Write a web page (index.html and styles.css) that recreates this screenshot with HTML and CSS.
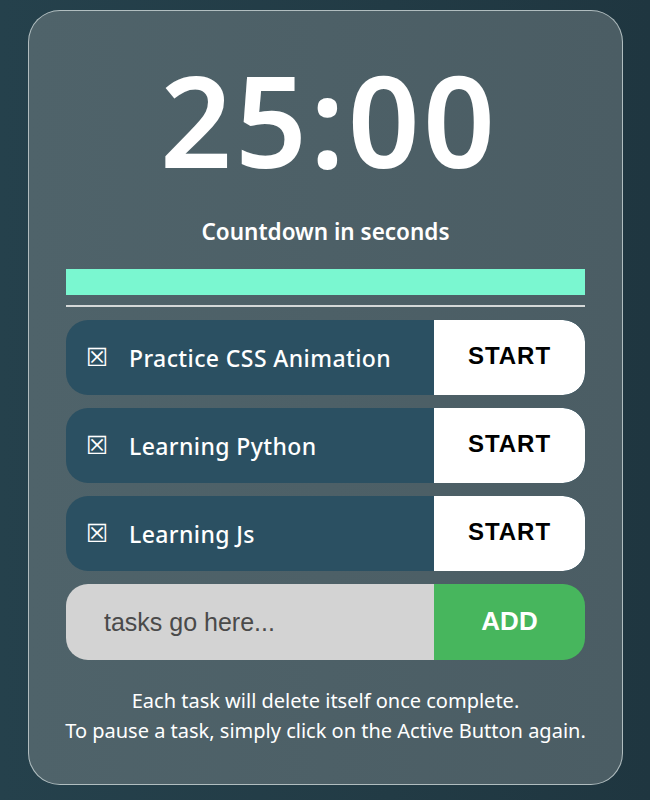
FILE: index.html
```html
<!DOCTYPE html>
<html>
<head>
<meta charset="utf-8">
<link rel="stylesheet" href="styles.css">
</head>
<body>
<main class="card">
  <div class="timer">25:00</div>
  <div class="caption">Countdown in seconds</div>
  <div class="progress"></div>
  <hr class="divider">
  <ul class="tasks">
    <li class="task"><span class="task-label"><span class="box">☒</span>Practice CSS Animation</span><button class="start">START</button></li>
    <li class="task"><span class="task-label"><span class="box">☒</span>Learning Python</span><button class="start">START</button></li>
    <li class="task"><span class="task-label"><span class="box">☒</span>Learning Js</span><button class="start">START</button></li>
  </ul>
  <form class="add-form">
    <input class="task-input" type="text" placeholder="tasks go here...">
    <button class="add" type="button">ADD</button>
  </form>
  <p class="note">Each task will delete itself once complete.<br>To pause a task, simply click on the Active Button again.</p>
</main>
</body>
</html>
```
FILE: styles.css
```css
* { box-sizing: border-box; }
html, body { margin: 0; height: 100%; }
body {
  background: linear-gradient(90deg, #25414c 0%, #223b45 60%, #1f3640 100%);
  font-family: "Noto Sans", "DejaVu Sans", sans-serif;
  color: #fff;
  padding: 10px 27px 15px 28px;
}
.card {
  width: 595px;
  height: 775px;
  border: 1px solid rgba(220, 230, 230, 0.7);
  border-radius: 32px;
  background: linear-gradient(90deg, #4f636a 0%, #4b5d64 100%);
  padding: 46px 37px 0;
  display: flex;
  flex-direction: column;
}
.timer {
  text-align: center;
  font-size: 126px;
  font-weight: 600;
  line-height: 120px;
  letter-spacing: 3px;
  padding-left: 7px;
  margin-top: 2px;
}
.caption {
  text-align: center;
  font-size: 22.5px;
  font-weight: 600;
  margin-top: 38px;
  line-height: 30px;
}
.progress {
  height: 26px;
  background: #7af7d0;
  margin-top: 22px;
}
.divider {
  border: 0;
  height: 2px;
  background: #d4d8d8;
  margin: 10px 0 0;
}
.tasks {
  list-style: none;
  margin: 13px 0 0;
  padding: 0;
  display: flex;
  flex-direction: column;
  gap: 13px;
}
.task {
  display: flex;
  height: 75px;
  border-radius: 22px;
  background: #2b5062;
  overflow: hidden;
}
.task-label {
  flex: 1;
  display: flex;
  align-items: center;
  padding-left: 20px;
  font-size: 23px;
  font-weight: 500;
  letter-spacing: 0.4px;
}
.box {
  font-family: "DejaVu Sans", sans-serif;
  font-size: 25px;
  width: 43px;
  color: #fff;
  letter-spacing: 0;
}
.start {
  width: 151px;
  border: 0;
  background: #fff;
  border-radius: 0 22px 22px 0;
  font-family: "Liberation Sans", Arial, sans-serif;
  font-weight: 700;
  font-size: 24px;
  letter-spacing: 1px;
  color: #000;
  padding: 0 0 4px;
}
.add-form {
  display: flex;
  height: 76px;
  margin-top: 13px;
  border-radius: 22px;
  overflow: hidden;
}
.task-input {
  flex: 1;
  border: 0;
  background: #d3d3d3;
  padding-left: 38px;
  font-family: "Liberation Sans", Arial, sans-serif;
  font-size: 25px;
  color: #444;
  outline: none;
}
.task-input::placeholder { color: #4a4a4a; }
.add {
  width: 151px;
  border: 0;
  background: #47b65d;
  color: #fff;
  font-family: "Liberation Sans", Arial, sans-serif;
  font-weight: 700;
  font-size: 26px;
  padding: 0 0 2px;
}
.note {
  text-align: center;
  font-size: 20px;
  line-height: 30px;
  white-space: nowrap;
  margin: 26px -36px 0;
}
```
